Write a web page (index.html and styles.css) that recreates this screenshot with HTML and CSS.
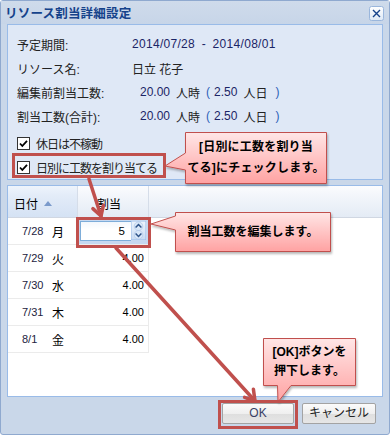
FILE: index.html
```html
<!DOCTYPE html>
<html lang="ja">
<head>
<meta charset="utf-8">
<title>リソース割当詳細設定</title>
<link rel="stylesheet" href="styles.css">
</head>
<body>
<div class="stage">
  <div class="window">
    <div class="titlebar">
      <span class="title">リソース割当詳細設定</span>
      <span class="close">
        <svg width="15" height="15" viewBox="0 0 15 15"><defs><linearGradient id="cg" x1="0" y1="0" x2="0" y2="1"><stop offset="0" stop-color="#ffffff"/><stop offset="1" stop-color="#dde8f6"/></linearGradient></defs><rect x="0.5" y="0.5" width="14" height="14" rx="2" fill="url(#cg)" stroke="#9ab6dc"/><path d="M4 4 L11 11 M11 4 L4 11" stroke="#15428b" stroke-width="1.4" fill="none"/></svg>
      </span>
    </div>
    <div class="wbody">
      <div class="form">
        <div class="frow"><span class="lbl">予定期間:</span><span class="val num wide">2014/07/28 - 2014/08/01</span></div>
        <div class="frow"><span class="lbl">リソース名:</span><span class="val">日立 花子</span></div>
        <div class="frow"><span class="lbl">編集前割当工数:</span><span class="val ind"><span class="num">20.00</span><span class="u">人時</span><span class="par po">(</span><span class="num">2.50</span><span class="u">人日</span><span class="par pc">)</span></span></div>
        <div class="frow"><span class="lbl">割当工数(合計):</span><span class="val ind"><span class="num">20.00</span><span class="u">人時</span><span class="par po">(</span><span class="num">2.50</span><span class="u">人日</span><span class="par pc">)</span></span></div>
        <div class="cbrow first"><span class="cbox"><svg width="13" height="13" viewBox="0 0 13 13"><rect x="0.5" y="0.5" width="12" height="12" fill="#fff" stroke="#333"/><path d="M3 6.5 L5.3 9 L10 3.8" stroke="#000" stroke-width="1.8" fill="none"/></svg></span><span class="cbl">休日は不稼動</span></div>
        <div class="cbrow"><span class="cbox"><svg width="13" height="13" viewBox="0 0 13 13"><rect x="0.5" y="0.5" width="12" height="12" fill="#fff" stroke="#333"/><path d="M3 6.5 L5.3 9 L10 3.8" stroke="#000" stroke-width="1.8" fill="none"/></svg></span><span class="cbl">日別に工数を割り当てる</span></div>
      </div>
      <div class="grid">
        <div class="ghead">
          <div class="hc hdate">日付<span class="sort"></span></div>
          <div class="hc hamt">割当</div>
          <div class="hc hfill"></div>
        </div>
        <div class="grow">
          <div class="c cdate"><span class="d">7/28</span><span class="w">月</span></div>
          <div class="c camt editing">
            <div class="spinner">
              <span class="sinput">5</span>
              <span class="strig"><svg width="15" height="19" viewBox="0 0 15 19"><defs><linearGradient id="sg" x1="0" y1="0" x2="0" y2="1"><stop offset="0" stop-color="#eef4fc"/><stop offset="1" stop-color="#c9dbf2"/></linearGradient></defs><rect x="0" y="0" width="15" height="19" fill="url(#sg)" stroke="#99bbe8"/><circle cx="7.5" cy="5.2" r="4.3" fill="#d9e7f8" stroke="#a9c3e6" stroke-width="0.6"/><circle cx="7.5" cy="13.8" r="4.3" fill="#d9e7f8" stroke="#a9c3e6" stroke-width="0.6"/><path d="M4.6 6.6 L7.5 3.6 L10.4 6.6" stroke="#2d5288" stroke-width="1.5" fill="none"/><path d="M4.6 12.4 L7.5 15.4 L10.4 12.4" stroke="#2d5288" stroke-width="1.5" fill="none"/></svg></span>
            </div>
          </div>
        </div>
        <div class="grow"><div class="c cdate"><span class="d">7/29</span><span class="w">火</span></div><div class="c camt">4.00</div></div>
        <div class="grow"><div class="c cdate"><span class="d">7/30</span><span class="w">水</span></div><div class="c camt">4.00</div></div>
        <div class="grow"><div class="c cdate"><span class="d">7/31</span><span class="w">木</span></div><div class="c camt">4.00</div></div>
        <div class="grow"><div class="c cdate"><span class="d">8/1</span><span class="w">金</span></div><div class="c camt">4.00</div></div>
      </div>
    </div>
    <div class="footer">
      <button class="btn ok">OK</button>
      <button class="btn cancel">キャンセル</button>
    </div>
  </div>

  <svg class="overlay" width="390" height="435" viewBox="0 0 390 435">
    <defs>
      <linearGradient id="pink" x1="0" y1="0" x2="0" y2="1">
        <stop offset="0" stop-color="#ffe6e6"/>
        <stop offset="1" stop-color="#ffa2a2"/>
      </linearGradient>
      <filter id="sh" x="-10%" y="-10%" width="130%" height="140%">
        <feDropShadow dx="1" dy="2" stdDeviation="1.2" flood-color="#000" flood-opacity="0.28"/>
      </filter>
    </defs>
    <path d="M185.5 132.5 H326.5 V183.5 H185.5 V170 L165 166 L185.5 153 Z" fill="url(#pink)" stroke="#c0504d" filter="url(#sh)"/>
    <path d="M175.5 212.5 H330.5 V251.5 H175.5 V230 L151 224 L175.5 216 Z" fill="url(#pink)" stroke="#c0504d" filter="url(#sh)"/>
    <path d="M263.5 338.5 H355.5 V385.5 H291 L278 402 L277.5 385.5 H263.5 Z" fill="url(#pink)" stroke="#c0504d" filter="url(#sh)"/>
    <g stroke="#c0504d" stroke-width="3.5" fill="none" stroke-linecap="round" stroke-linejoin="round">
      <path d="M89 179 L101 216"/>
      <path d="M92.9 208.6 L101 216 L103.4 205.3"/>
      <path d="M116 248 L255 401"/>
      <path d="M244.6 397.4 L255 401 L253.4 389.3"/>
    </g>
  </svg>

  <div class="hl hl-check"></div>
  <div class="hl hl-spin"></div>
  <div class="hl hl-ok"></div>

  <div class="ctext ct1">[日別に工数を割り当<br>てる]にチェックします。</div>
  <div class="ctext ct2">割当工数を編集します。</div>
  <div class="ctext ct3">[OK]ボタンを<br>押下します。</div>
</div>
</body>
</html>
```

FILE: styles.css
```css
html, body {
  margin: 0;
  padding: 0;
  background: #ffffff;
}

.stage {
  position: relative;
  width: 390px;
  height: 435px;
  overflow: hidden;
  font-family: "Liberation Sans", "Noto Sans CJK JP", sans-serif;
  font-size: 12px;
  color: #000;
}

.window {
  width: 390px;
  height: 435px;
  box-sizing: border-box;
  border: 1px solid #8fa9cf;
  border-radius: 3px;
  background: #c9d7e9;
  display: flex;
  flex-direction: column;
}

.titlebar {
  height: 23px;
  flex: none;
  display: flex;
  align-items: center;
  justify-content: space-between;
  padding: 0 5px 0 4px;
  background: linear-gradient(#cfdbeb, #c7d5e8);
}

.title {
  font-weight: bold;
  color: #15428b;
  font-size: 12.5px;
  letter-spacing: 0.2px;
}

.close {
  display: flex;
  width: 15px;
  height: 15px;
  margin-top: 2px;
}

.wbody {
  padding: 0 6px;
  flex: none;
}

.form {
  height: 156px;
  box-sizing: border-box;
  border: 1px solid #99bbe8;
  background: #dfe8f6;
  padding: 7px 9px 0;
}

.frow {
  height: 24px;
  display: flex;
  align-items: center;
  color: #222;
}

.lbl {
  width: 115px;
  flex: none;
}

.val {
  display: flex;
  align-items: center;
  white-space: nowrap;
}

.val.ind {
  padding-left: 8px;
}

.val.wide {
  word-spacing: 3px;
  letter-spacing: 0.3px;
}

.num {
  color: #1b2566;
}

.u {
  margin-left: 6px;
}

.par {
  color: #2c5fb8;
}

.po {
  margin: 0 4px 0 6px;
}

.pc {
  margin-left: 8px;
}

.cbrow {
  height: 24px;
  display: flex;
  align-items: center;
  color: #222;
}

.cbrow.first {
  margin-top: 3px;
}

.cbl {
  letter-spacing: -1px;
  white-space: nowrap;
}

.cbox {
  display: flex;
  width: 13px;
  height: 13px;
  margin: 0 6px 0 0;
}

.grid {
  margin-top: 5px;
  height: 212px;
  box-sizing: border-box;
  border: 1px solid #99bbe8;
  background: #ffffff;
}

.ghead {
  height: 32px;
  box-sizing: border-box;
  display: flex;
  border-bottom: 1px solid #d0d7e2;
  background: linear-gradient(#fbfcfe 0%, #f3f6fb 30%, #e4ebf5 100%);
}

.hc {
  box-sizing: border-box;
  height: 31px;
  padding-top: 9px;
  border-right: 1px solid #d5dde9;
  font-size: 12px;
  color: #000;
}

.hdate {
  width: 70px;
  padding-left: 6px;
  display: flex;
  align-items: flex-start;
  background: linear-gradient(#eef4fc 0%, #e3ecf8 30%, #d5e2f4 100%);
}

.sort {
  width: 0;
  height: 0;
  border-left: 4px solid transparent;
  border-right: 4px solid transparent;
  border-bottom: 5px solid #7a9acb;
  margin: 6px 0 0 6px;
}

.hamt {
  width: 71px;
  padding-left: 19px;
}

.hfill {
  flex: 1;
  border-right: none;
}

.grow {
  width: 141px;
  height: 27px;
  box-sizing: border-box;
  display: flex;
  border-bottom: 1px solid #ebebeb;
  border-right: 1px solid #ebebeb;
}

.c {
  box-sizing: border-box;
  height: 26px;
  display: flex;
  align-items: center;
}

.cdate {
  width: 70px;
  padding-left: 14px;
}

.d {
  width: 30px;
  font-size: 11px;
  color: #232340;
}

.w {
  font-size: 12px;
}

.camt {
  width: 70px;
  justify-content: flex-end;
  padding-right: 4px;
  font-size: 11px;
}

.camt.editing {
  background: #c6d8f0;
  justify-content: flex-start;
  padding: 0 0 0 2px;
}

.spinner {
  display: flex;
  height: 20px;
  width: 66px;
}

.sinput {
  flex: 1;
  box-sizing: border-box;
  height: 20px;
  background: linear-gradient(#f3f7fc, #ffffff 40%);
  border: 1px solid #7eadd9;
  border-right: none;
  text-align: right;
  padding-right: 6px;
  font-size: 11.5px;
  line-height: 18px;
  color: #000;
}

.strig {
  display: flex;
  width: 15px;
  height: 20px;
  align-items: flex-start;
}

.footer {
  flex: none;
  display: flex;
  justify-content: flex-end;
  gap: 8px;
  padding: 6px 13px 0 0;
}

.btn {
  height: 21px;
  box-sizing: border-box;
  border: 1px solid #a3a3a3;
  border-radius: 2px;
  background: linear-gradient(#fbfbfb 0%, #efefef 50%, #dedede 51%, #e6e6e6 100%);
  font-family: "Liberation Sans", "Noto Sans CJK JP", sans-serif;
  font-size: 12px;
  color: #222;
  padding: 0;
  line-height: 19px;
}

.btn.ok {
  width: 72px;
  color: #3a3f66;
}

.btn.cancel {
  width: 74px;
}

.overlay {
  position: absolute;
  left: 0;
  top: 0;
  pointer-events: none;
}

.hl {
  position: absolute;
  box-sizing: border-box;
  border: 3px solid #c0504d;
  pointer-events: none;
}

.hl-check {
  left: 12px;
  top: 153px;
  width: 154px;
  height: 25px;
}

.hl-spin {
  left: 76px;
  top: 217px;
  width: 75px;
  height: 31px;
}

.hl-ok {
  left: 218px;
  top: 400px;
  width: 80px;
  height: 29px;
}

.ctext {
  position: absolute;
  display: flex;
  align-items: center;
  justify-content: center;
  text-align: center;
  font-weight: bold;
  font-size: 12px;
  line-height: 21px;
  color: #000;
  white-space: nowrap;
}

.ct1 {
  left: 186px;
  top: 133px;
  width: 140px;
  height: 50px;
  letter-spacing: 0.2px;
}

.ct2 {
  left: 176px;
  top: 213px;
  width: 154px;
  height: 38px;
}

.ct3 {
  left: 264px;
  top: 339px;
  width: 91px;
  height: 46px;
  line-height: 19px;
}
```
